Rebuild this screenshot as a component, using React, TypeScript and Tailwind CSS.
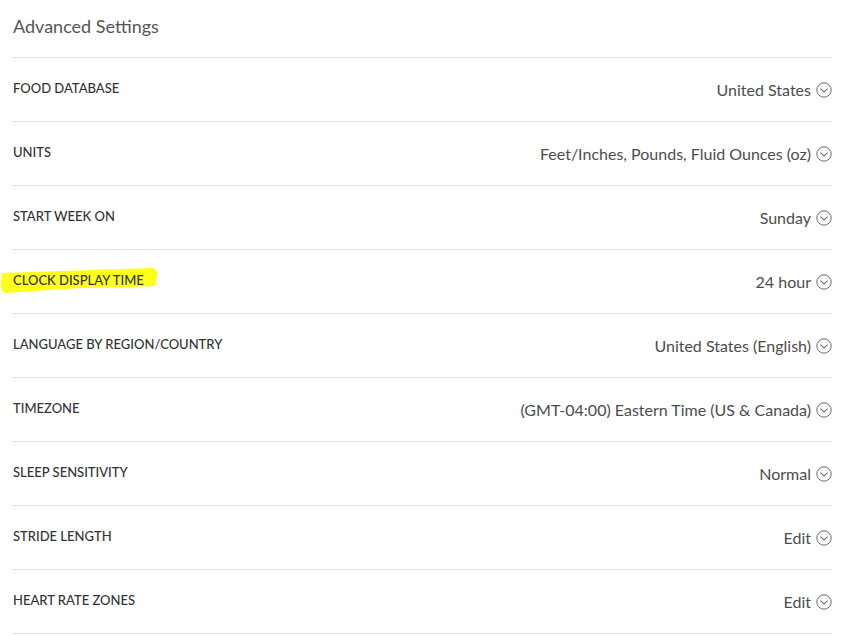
const rows: { label: string; value: string; highlight?: boolean }[] = [
  { label: "Food Database", value: "United States" },
  { label: "Units", value: "Feet/Inches, Pounds, Fluid Ounces (oz)" },
  { label: "Start Week On", value: "Sunday" },
  { label: "Clock Display Time", value: "24 hour", highlight: true },
  { label: "Language by Region/Country", value: "United States (English)" },
  { label: "Timezone", value: "(GMT-04:00) Eastern Time (US & Canada)" },
  { label: "Sleep Sensitivity", value: "Normal" },
  { label: "Stride Length", value: "Edit" },
  { label: "Heart Rate Zones", value: "Edit" },
]

function Chevron() {
  return (
    <svg width="16" height="16" viewBox="0 0 16 16" fill="none" className="shrink-0">
      <circle cx="8" cy="8" r="7.2" stroke="#6b6b6b" strokeWidth="1" />
      <path d="M4.8 6.8 L8 9.9 L11.2 6.8" stroke="#6b6b6b" strokeWidth="1.1" strokeLinecap="round" strokeLinejoin="round" />
    </svg>
  )
}

export default function App() {
  return (
    <div className="w-[855px] h-[636px] bg-white overflow-hidden pl-[12px] pr-[23px]" style={{ fontFamily: "Lato, 'Open Sans', sans-serif" }}>
      <h1 className="pt-[14px] pb-[19px] text-[18px] leading-[24px] text-[#555] font-normal pl-px">Advanced Settings</h1>
      <div className="border-t border-[#e2e2e2]">
        {rows.map((r) => (
          <div key={r.label} className="h-[64px] border-b border-[#e2e2e2] flex items-start justify-between pt-[22px]">
            <div className="relative text-[13px] leading-[16px] uppercase text-[#333] font-medium pl-px">
              {r.highlight && (
                <svg className="absolute -left-[12px] -top-[5px]" width="160" height="27" viewBox="0 0 160 27">
                  <path d="M2 6 L152 1 Q159 2 157 10 L155 19 Q140 20 80 21 L6 26 Q0 25 1 16 Z" fill="#ffff1a" />
                </svg>
              )}
              <span className="relative">{r.label}</span>
            </div>
            <div className="flex items-center gap-[5px] text-[16px] leading-[20px] text-[#4d4d4d]">
              <span>{r.value}</span>
              <Chevron />
            </div>
          </div>
        ))}
      </div>
    </div>
  )
}
